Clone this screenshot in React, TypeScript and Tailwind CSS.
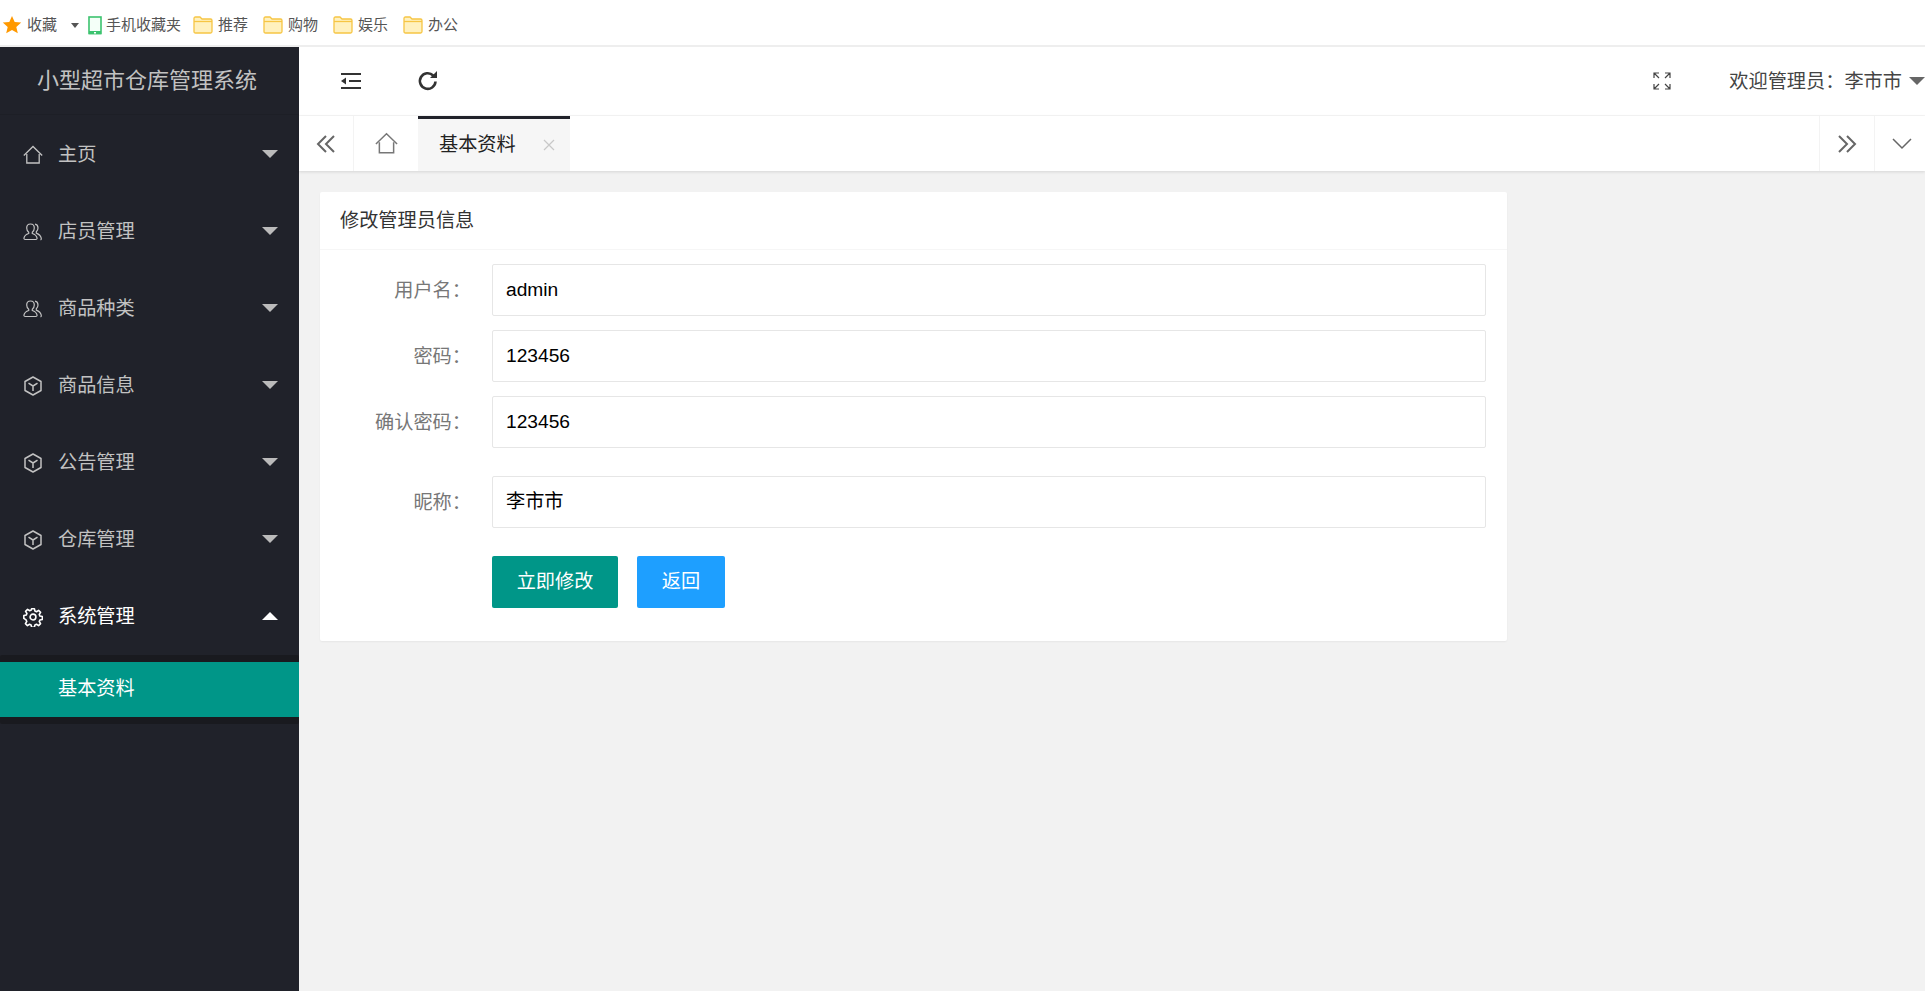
import React from "react";

const font = { fontFamily: '"Liberation Sans", "Noto Sans CJK SC", sans-serif' };

const Star = () => (
  <svg width="20" height="20" viewBox="0 0 20 20"><path d="M10 1l2.7 6 6.5.6-4.9 4.3 1.5 6.4L10 15l-5.8 3.3 1.5-6.4L.8 7.6 7.3 7z" fill="#f90" /></svg>
);
const Folder = () => (
  <svg width="20" height="18" viewBox="0 0 20 18" className="shrink-0">
    <path d="M1 2.5C1 1.5 1.5 1 2.5 1H7l2 2h8.5c1 0 1.5.5 1.5 1.5V15.5c0 1-.5 1.5-1.5 1.5h-15C1.5 17 1 16.5 1 15.5z" fill="#fff1bf" stroke="#f6c544" strokeWidth="1.3" />
    <path d="M1 5.5h18" stroke="#f6c544" strokeWidth="1.3" />
  </svg>
);
const Phone = () => (
  <svg width="14" height="19" viewBox="0 0 14 19"><rect x="1" y="1" width="12" height="16.5" fill="#f4fff8" stroke="#3cc36f" strokeWidth="1.6" /><rect x="1" y="15" width="12" height="3.2" fill="#3cc36f" /><rect x="6" y="16" width="2" height="1.5" fill="#fff" /></svg>
);
const Home = ({ c = "currentColor", size = 20 }: { c?: string; size?: number }) => (
  <svg width={size} height={size} viewBox="0 0 20 20" fill="none" stroke={c} strokeWidth="1.3"><path d="M.8 10.5 10 1.5l9.2 9" /><path d="M3.8 9v9h12.4V9" /></svg>
);
const Users = () => (
  <svg width="20" height="20" viewBox="0 0 20 20" fill="none" stroke="currentColor" strokeWidth="1.2"><path d="M7.5 2c2.3 0 3.8 1.8 3.8 4 0 1.900-.9 3.300-2 4.200v1.300c2.100.7 4.200 2 4.700 4.300.2.900-.3 1.700-1.200 1.700H2.200c-.9 0-1.400-.8-1.200-1.700.5-2.300 2.600-3.600 4.700-4.300v-1.300c-1.100-.9-2-2.300-2-4.200 0-2.200 1.500-4 3.800-4z" /><path d="M12 2.200c2 .3 3 2 3 3.800 0 1.600-.7 2.800-1.700 3.700v1.400c2 .8 4.500 2.500 5 5.200.1.800-.2 1.400-.8 1.600" /></svg>
);
const Cube = () => (
  <svg width="20" height="20" viewBox="0 0 20 20" fill="none" stroke="currentColor" strokeWidth="1.5" strokeLinejoin="round"><path d="M10 1l8 4.5v9L10 19l-8-4.5v-9z" /><path d="M5.5 7.2 10 10l4.5-2.800M10 10v5" /></svg>
);
const Gear = () => (
  <svg width="20" height="20" viewBox="0 0 24 24" fill="none" stroke="currentColor" strokeWidth="1.9" strokeLinejoin="round"><circle cx="12" cy="12" r="3.5" /><path d="M10.3 2h3.4l.6 2.900 1.900.8 2.500-1.600 2.400 2.400-1.600 2.500.8 1.900 2.900.6v3.400l-2.900.6-.8 1.900 1.600 2.500-2.400 2.400-2.500-1.600-1.900.8-.6 2.900h-3.400l-.6-2.900-1.900-.8-2.500 1.600-2.400-2.400 1.600-2.500-.8-1.900L1 13.700v-3.400l2.900-.6.8-1.900L3.100 5.300l2.400-2.400L8 4.500l1.900-.8z" /></svg>
);
const Caret = ({ up }: { up?: boolean }) => (
  <div className={up ? "-mt-[2px] w-0 h-0 border-x-[8px] border-x-transparent border-b-[8px] border-b-white" : "-mt-[2px] w-0 h-0 border-x-[8px] border-x-transparent border-t-[8px] border-t-[#bbbbbb]"} />
);

const nav: { label: string; icon: React.ReactNode }[] = [
  { label: "主页", icon: <Home /> },
  { label: "店员管理", icon: <Users /> },
  { label: "商品种类", icon: <Users /> },
  { label: "商品信息", icon: <Cube /> },
  { label: "公告管理", icon: <Cube /> },
  { label: "仓库管理", icon: <Cube /> },
];

const fields = [
  { label: "用户名\uFF1A", value: "admin", cls: "mb-[14px]" },
  { label: "密码\uFF1A", value: "123456", cls: "mb-[14px]" },
  { label: "确认密码\uFF1A", value: "123456", cls: "mb-[28px]" },
  { label: "昵称\uFF1A", value: "李市市", cls: "mb-[28px]" },
];

export default function App() {
  return (
    <div style={font} className="w-[1925px] h-[991px] overflow-hidden flex flex-col bg-[#f2f2f2]">
      <div className="h-[47px] shrink-0 bg-white border-b-2 border-[#eeeeee] flex items-center pl-[2px] pt-[5px] text-[15px] text-[#555]">
        <Star />
        <span className="ml-[5px]">收藏</span>
        <div className="ml-[14px] w-0 h-0 border-x-[4px] border-x-transparent border-t-[5px] border-t-[#555]" />
        <div className="ml-[9px]"><Phone /></div>
        <span className="ml-[4px]">手机收藏夹</span>
        <div className="flex ml-[12px] gap-[15px]">
          {["推荐", "购物", "娱乐", "办公"].map((t) => (
            <div key={t} className="flex items-center gap-[5px]">
              <Folder />
              <span>{t}</span>
            </div>
          ))}
        </div>
      </div>

      <div className="flex-1 flex min-h-0">
        <aside className="w-[299px] shrink-0 bg-[#20222a] flex flex-col">
          <div className="h-[68px] shrink-0 flex items-center justify-center pr-[5px] text-[22px] text-[#c2c2c2] border-b border-[#1d1f26]">小型超市仓库管理系统</div>
          <nav className="pt-[1px]">
            {nav.map((n) => (
              <div key={n.label} className="h-[77px] pl-[23px] pr-[21px] flex items-center text-[19.2px] text-[#c2c2c2]">
                <span className="w-[20px] flex justify-center">{n.icon}</span>
                <span className="ml-[15px] flex-1 pt-[2px]">{n.label}</span>
                <Caret />
              </div>
            ))}
            <div className="h-[77px] pl-[23px] pr-[21px] flex items-center text-[19.2px] text-white">
              <span className="w-[20px] flex justify-center"><Gear /></span>
              <span className="ml-[15px] flex-1 pt-[2px]">系统管理</span>
              <Caret up />
            </div>
            <div className="py-[7px] bg-[#191a1f] rounded-[2px]">
              <div className="h-[55px] pl-[58px] flex items-center text-[19.2px] text-white bg-[#009688]">基本资料</div>
            </div>
          </nav>
        </aside>

        <main className="flex-1 min-w-0 flex flex-col">
          <header className="h-[69px] shrink-0 bg-white border-b border-[#f6f6f6] flex items-center text-[#333]">
            <div className="ml-[40px] w-[24px] flex justify-center">
              <svg width="22" height="18" viewBox="0 0 22 18" fill="none" stroke="#333" strokeWidth="2"><path d="M1 2h20M9 9h12M1 16h20" /><path d="M1 9l5-3.5v7z" fill="#333" stroke="none" /></svg>
            </div>
            <div className="ml-[53px] w-[24px] flex justify-center">
              <svg width="22" height="22" viewBox="0 0 22 22" fill="none" stroke="#333" strokeWidth="2.6"><path d="M18.5 11.5a7.8 7.8 0 1 1-2.3-6" /><path d="M20 1v7h-7z" fill="#333" stroke="none" /></svg>
            </div>
            <div className="ml-auto mr-[58px]">
              <svg width="18" height="18" viewBox="0 0 18 18" fill="none" stroke="#444" strokeWidth="1.2"><path d="M1 6V1h5M1 1l5 5M17 6V1h-5M17 1l-5 5M1 12v5h5M1 17l5-5M17 12v5h-5M17 17l-5-5" /></svg>
            </div>
            <span className="text-[19.2px] text-[#444] pt-[2px]">欢迎管理员{"\uFF1A"}李市市</span>
            <div className="ml-[7px] w-0 h-0 border-x-[8px] border-x-transparent border-t-[8px] border-t-[#666]" />
          </header>

          <div className="h-[55px] shrink-0 bg-white flex shadow-[0_1px_3px_rgba(0,0,0,0.12)] text-[#777]">
            <div className="w-[55px] border-r border-[#f3f3f3] flex items-center justify-center">
              <svg width="20" height="18" viewBox="0 0 20 18" fill="none" stroke="#666" strokeWidth="2"><path d="M10 1 2 9l8 8M18 1l-8 8 8 8" /></svg>
            </div>
            <div className="w-[64px] flex items-center justify-center"><Home c="#777" size={23} /></div>
            <div className="w-[152px] bg-[#f6f6f6] border-t-[3px] border-[#20222a] flex items-center pl-[21px] text-[19.2px] text-[#222]">
              <span className="flex-1">基本资料</span>
              <svg className="mr-[15px]" width="12" height="12" viewBox="0 0 12 12" stroke="#c8c8c8" strokeWidth="1.2"><path d="M1 1l10 10M11 1 1 11" /></svg>
            </div>
            <div className="ml-auto w-[55px] border-l border-[#f3f3f3] flex items-center justify-center">
              <svg width="20" height="18" viewBox="0 0 20 18" fill="none" stroke="#666" strokeWidth="2"><path d="M2 1l8 8-8 8M10 1l8 8-8 8" /></svg>
            </div>
            <div className="w-[51px] border-l border-[#f3f3f3] flex items-center justify-center pl-[4px]">
              <svg width="20" height="12" viewBox="0 0 20 12" fill="none" stroke="#666" strokeWidth="1.5"><path d="M1 1l9 9 9-9" /></svg>
            </div>
          </div>

          <div className="pt-[21px] pl-[21px]">
            <div className="w-[1187px] h-[449px] bg-white rounded-[2px] shadow-[0_1px_2px_rgba(0,0,0,0.05)]">
              <div className="h-[58px] border-b border-[#f6f6f6] flex items-center pl-[20px] pt-[2px] text-[19.2px] text-[#333]">修改管理员信息</div>
              <div className="pt-[14px] pl-[21px]">
                {fields.map((f) => (
                  <div key={f.label} className={`flex items-center ${f.cls}`}>
                    <label className="w-[130px] text-right text-[19.2px] text-[#777] pt-[2px]">{f.label}</label>
                    <div className="ml-[21px] w-[994px] h-[52px] border border-[#e6e6e6] rounded-[2px] flex items-center pl-[13px] text-[19.2px] text-black">{f.value}</div>
                  </div>
                ))}
                <div className="flex pl-[151px] gap-[19px]">
                  <button className="w-[126px] h-[52px] rounded-[2px] bg-[#009688] text-white text-[19.2px]">立即修改</button>
                  <button className="w-[88px] h-[52px] rounded-[2px] bg-[#1e9fff] text-white text-[19.2px]">返回</button>
                </div>
              </div>
            </div>
          </div>
        </main>
      </div>
    </div>
  );
}
